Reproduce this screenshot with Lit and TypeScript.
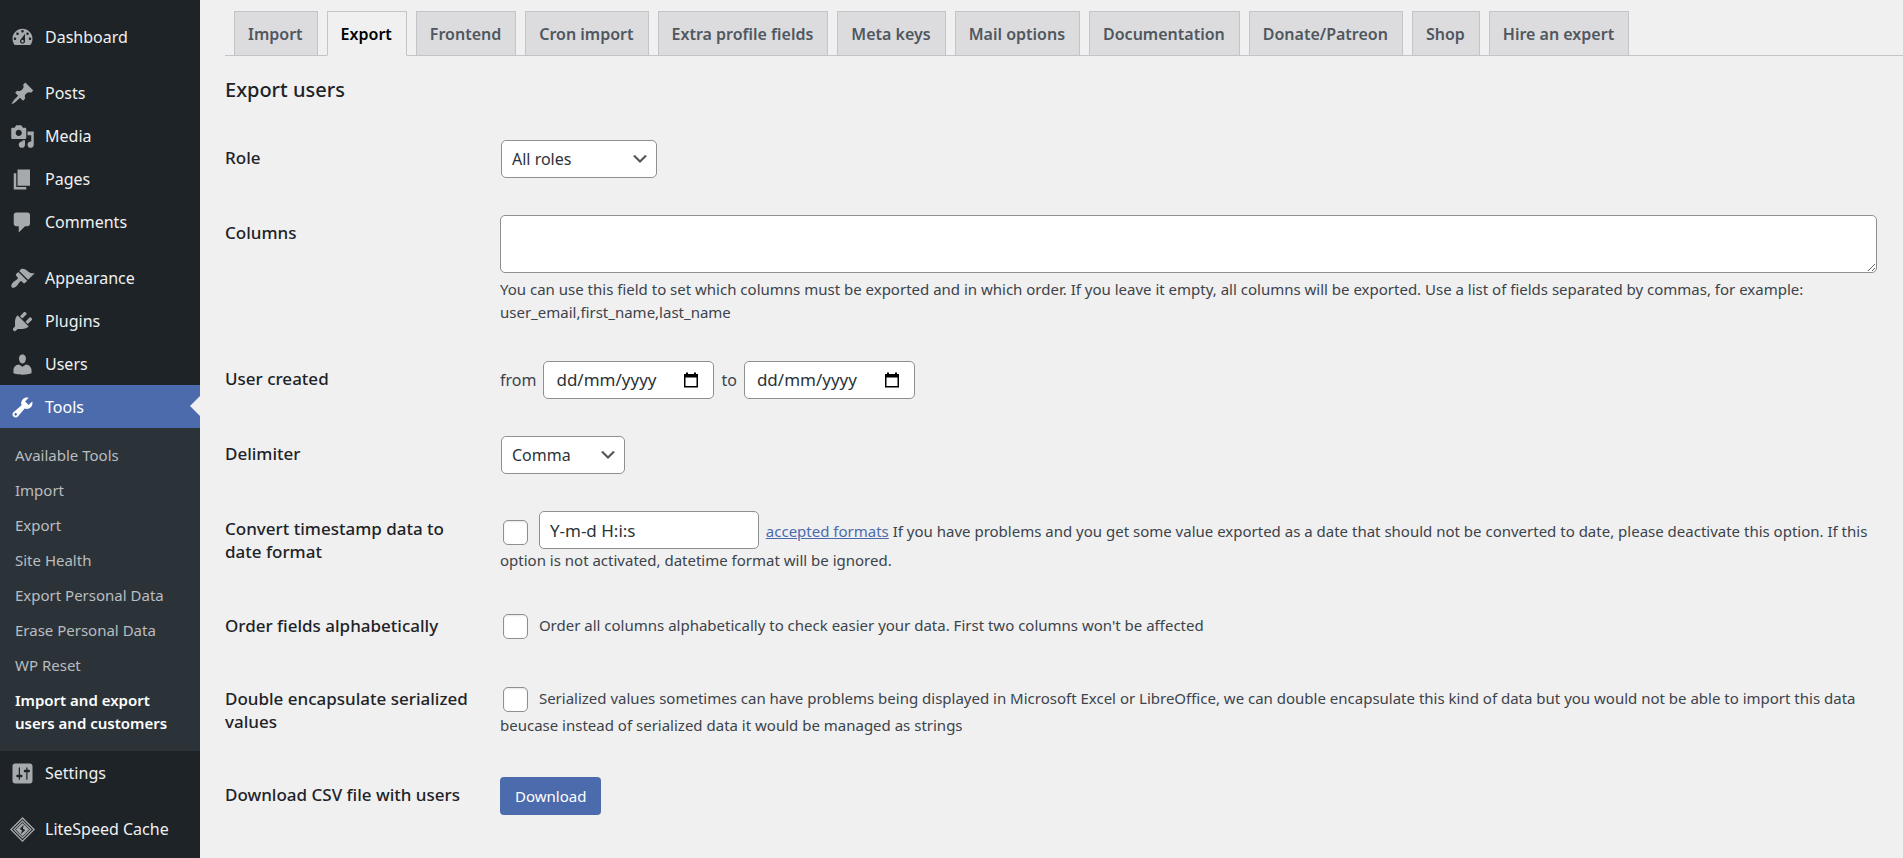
import { LitElement, html, css, svg } from "lit";
import { customElement, state } from "lit/decorators.js";
import { classMap } from "lit/directives/class-map.js";

/* Menu glyphs, all drawn on a 20 x 20 grid. */
const icons: Record<string, unknown> = {
  dashboard: svg`<path d="M3.76 16h12.48c1.1-1.37 1.76-3.11 1.76-5 0-4.42-3.58-8-8-8s-8 3.58-8 8c0 1.89.66 3.63 1.76 5zM10 4c.55 0 1 .45 1 1s-.45 1-1 1-1-.45-1-1 .45-1 1-1zM6 6c.55 0 1 .45 1 1s-.45 1-1 1-1-.45-1-1 .45-1 1-1zm8 0c.55 0 1 .45 1 1s-.45 1-1 1-1-.45-1-1 .45-1 1-1zm-5.37 5.55L12 7v6c0 1.1-.9 2-2 2s-2-.9-2-2c0-.57.24-1.08.63-1.45zM4 10c.55 0 1 .45 1 1s-.45 1-1 1-1-.45-1-1 .45-1 1-1zm12 0c.55 0 1 .45 1 1s-.45 1-1 1-1-.45-1-1 .45-1 1-1zm-5 3c0-.55-.45-1-1-1s-1 .45-1 1 .45 1 1 1 1-.45 1-1z"/>`,
  posts: svg`<path d="M10.44 3.02l1.82-1.82 6.36 6.35-1.83 1.82c-1.05-.68-2.48-.57-3.41.36l-.75.75c-.92.93-1.04 2.35-.35 3.41l-1.83 1.82-2.41-2.41-2.8 2.79c-.42.42-3.38 2.71-3.8 2.29s1.86-3.39 2.28-3.81l2.79-2.79L4.1 9.36l1.83-1.82c1.05.69 2.48.57 3.4-.36l.75-.75c.93-.92 1.05-2.35.36-3.41z"/>`,
  media: svg`<path d="M13 11V4c0-.55-.45-1-1-1h-1.670L9 1H5L3.670 3H2c-.55 0-1 .45-1 1v7c0 .55.45 1 1 1h10c.55 0 1-.45 1-1zM7 4.500c1.380 0 2.500 1.120 2.500 2.500S8.380 9.500 7 9.500 4.500 8.380 4.500 7 5.620 4.500 7 4.500zM14 6h5v10.500c0 1.380-1.120 2.500-2.500 2.500S14 17.880 14 16.500s1.120-2.500 2.500-2.500c.170 0 .340.020.500.050V9h-3V6zm-4 8.050V13h2v3.500c0 1.380-1.120 2.500-2.500 2.500S7 17.880 7 16.500 8.120 14 9.500 14c.170 0 .340.020.500.050z"/>`,
  pages: svg`<path d="M6 15V2h10v13H6zm-1 1h8v2H3V5h2v11z"/>`,
  comments: svg`<path d="M5 2h9c1.100 0 2 .9 2 2v7c0 1.100-.9 2-2 2h-2l-5 5v-5H5c-1.100 0-2-.9-2-2V4c0-1.100.9-2 2-2z"/>`,
  appearance: svg`<path d="M14.48 11.06L7.41 3.99l1.5-1.5c.5-.56 2.300-.47 3.510.32 1.210.8 1.430 1.280 2.910 2.100 1.180.64 2.450 1.260 4.450.85zm-.71.710L6.700 4.700 4.930 6.470c-.39.39-.39 1.020 0 1.410l1.060 1.060c.39.39.39 1.030 0 1.420-.600.600-1.430 1.110-2.210 1.690-.350.260-.700.530-1.010.840C1.430 14.230.400 16.080 1.400 17.070c.990 1 2.840-.030 4.180-1.360.310-.310.580-.660.850-1.020.570-.780 1.080-1.610 1.690-2.210.390-.390 1.020-.390 1.410 0l1.060 1.060c.390.390 1.020.390 1.410 0z"/>`,
  plugins: svg`<path d="M13.110 4.360L9.870 7.600 8 5.730l3.240-3.240c.350-.340 1.050-.200 1.560.320.520.510.660 1.210.310 1.550zm-8 1.770l.910-1.120 9.010 9.010-1.190.840c-.710.710-2.630 1.160-3.820 1.160H6.140L4.900 17.260c-.590.590-1.540.590-2.120 0-.590-.580-.590-1.530 0-2.120l1.240-1.240v-3.880c0-1.130.400-3.190 1.090-3.890zm7.260 3.970l3.240-3.240c.340-.350 1.040-.210 1.550.310.520.510.660 1.210.310 1.550l-3.240 3.250z"/>`,
  users: svg`<path d="M10 9.250c-2.270 0-2.730-3.440-2.730-3.440C7 4.020 7.820 2 9.970 2c2.160 0 2.980 2.020 2.710 3.810 0 0-.410 3.440-2.680 3.440zm0 2.570L12.720 10c2.390 0 4.520 2.330 4.520 4.530v2.490s-3.650 1.130-7.240 1.130c-3.650 0-7.240-1.130-7.240-1.130v-2.490c0-2.250 1.940-4.480 4.470-4.480z"/>`,
  tools: svg`<path d="M16.680 9.770c-1.340 1.340-3.300 1.670-4.950.99l-5.410 6.520c-.99.99-2.590.99-3.580 0s-.99-2.590 0-3.570l6.520-5.420c-.68-1.650-.350-3.610.99-4.950 1.280-1.280 3.120-1.620 4.720-1.060l-2.890 2.890 2.820 2.820 2.860-2.870c.530 1.580.180 3.390-1.080 4.650zM3.810 16.210c.400.390 1.040.390 1.430 0 .400-.400.400-1.040 0-1.430-.390-.400-1.030-.400-1.430 0-.390.390-.390 1.030 0 1.430z"/>`,
  settings: svg`<path d="M18 16V4c0-1.100-.9-2-2-2H4c-1.100 0-2 .9-2 2v12c0 1.100.9 2 2 2h12c1.100 0 2-.9 2-2zM8 11h1c.55 0 1 .45 1 1s-.45 1-1 1H8v1.500c0 .28-.22.5-.5.5s-.5-.22-.5-.5V13H6c-.55 0-1-.45-1-1s.45-1 1-1h1V5.500c0-.28.22-.5.5-.5s.5.22.5.500V11zm5-2h-1c-.55 0-1-.45-1-1s.45-1 1-1h1V5.500c0-.28.22-.5.5-.5s.5.22.5.5V7h1c.55 0 1 .45 1 1s-.45 1-1 1h-1v5.500c0 .28-.22.5-.5.5s-.5-.22-.5-.5V9z"/>`,
  litespeed: svg`<path fill-rule="evenodd" d="M10 0l10 10-10 10L0 10zM10 1.500L1.500 10l8.500 8.500 8.500-8.500zM10 2.600L17.400 10 10 17.400 2.600 10zM10 4L4 10l6 6 6-6zM10 4.700L15.300 10 10 15.300 4.700 10zM10.900 6.200L7.700 9.600l1.900 1-.9 3.200 3.500-3.500-1.900-1z"/>`,
};

interface MenuItem {
  icon: string;
  label: string;
  current?: boolean;
}

const menuGroups: MenuItem[][] = [
  [{ icon: "dashboard", label: "Dashboard" }],
  [
    { icon: "posts", label: "Posts" },
    { icon: "media", label: "Media" },
    { icon: "pages", label: "Pages" },
    { icon: "comments", label: "Comments" },
  ],
  [
    { icon: "appearance", label: "Appearance" },
    { icon: "plugins", label: "Plugins" },
    { icon: "users", label: "Users" },
    { icon: "tools", label: "Tools", current: true },
    { icon: "settings", label: "Settings" },
  ],
  [{ icon: "litespeed", label: "LiteSpeed Cache" }],
];

const toolsSubmenu = [
  "Available Tools",
  "Import",
  "Export",
  "Site Health",
  "Export Personal Data",
  "Erase Personal Data",
  "WP Reset",
  "Import and export users and customers",
];

const tabs = [
  "Import",
  "Export",
  "Frontend",
  "Cron import",
  "Extra profile fields",
  "Meta keys",
  "Mail options",
  "Documentation",
  "Donate/Patreon",
  "Shop",
  "Hire an expert",
];

@customElement("admin-menu")
export class AdminMenu extends LitElement {
  static styles = css`
    :host {
      display: block;
      box-sizing: border-box;
      padding-top: 15px;
      background: #1d2327;
      color: #f0f0f1;
    }
    ul {
      list-style: none;
      margin: 0;
      padding: 0;
    }
    .group + .group {
      margin-top: 13px;
    }
    .link {
      display: flex;
      align-items: center;
      gap: 10px;
      box-sizing: border-box;
      height: 43px;
      padding: 1px 0 0 10px;
      color: inherit;
      font-size: 16px;
      line-height: 23px;
      text-decoration: none;
    }
    .icon {
      width: 25px;
      height: 25px;
      fill: #a7aaad;
    }
    .current {
      position: relative;
      background: #4b6bac;
      color: #fff;
    }
    .current .icon {
      fill: #fff;
    }
    .current::after {
      content: "";
      position: absolute;
      right: 0;
      top: 11px;
      border: 10px solid transparent;
      border-right-color: #f0f0f1;
      border-left-width: 0;
    }
    .submenu {
      padding: 10px 0;
      background: #2c3338;
    }
    .sub {
      display: block;
      padding: 6px 15px;
      color: #b9bcc0;
      font-size: 15px;
      line-height: 23px;
      text-decoration: none;
    }
    .sub.active {
      color: #fff;
      font-weight: 600;
    }
  `;

  render() {
    return html`<nav aria-label="Main menu">
      ${menuGroups.map(
        (group) => html`<ul class="group">
          ${group.map(
            (item) => html`<li>
              <a class=${classMap({ link: true, current: !!item.current })} href="#">
                <svg class="icon" viewBox="0 0 20 20" aria-hidden="true">${icons[item.icon]}</svg>
                <span>${item.label}</span>
              </a>
              ${item.current
                ? html`<ul class="submenu">
                    ${toolsSubmenu.map(
                      (label, i) => html`<li>
                        <a
                          class=${classMap({ sub: true, active: i === toolsSubmenu.length - 1 })}
                          href="#"
                          >${label}</a
                        >
                      </li>`
                    )}
                  </ul>`
                : ""}
            </li>`
          )}
        </ul>`
      )}
    </nav>`;
  }
}

@customElement("tab-bar")
export class TabBar extends LitElement {
  @state() private active = "Export";

  static styles = css`
    :host {
      display: block;
    }
    .tabs {
      display: flex;
      gap: 9px;
      padding: 11px 0 0 9px;
      border-bottom: 1px solid #c3c4c7;
    }
    .tab {
      padding: 10px 14px 8px 13px;
      margin-bottom: -1px;
      border: 1px solid #c3c4c7;
      background: #dcdcde;
      color: #50575e;
      font-size: 16px;
      font-weight: 600;
      line-height: 25px;
      white-space: nowrap;
      text-decoration: none;
    }
    .tab.active {
      border-bottom-color: #f0f0f1;
      background: #f0f0f1;
      color: #000;
    }
  `;

  render() {
    return html`<nav class="tabs" aria-label="Sections">
      ${tabs.map(
        (label) => html`<a
          class=${classMap({ tab: true, active: label === this.active })}
          href="#"
          @click=${(e: Event) => {
            e.preventDefault();
            this.active = label;
          }}
          >${label}</a
        >`
      )}
    </nav>`;
  }
}

@customElement("export-form")
export class ExportForm extends LitElement {
  static styles = css`
    :host {
      display: block;
      padding-right: 13px;
    }
    * {
      box-sizing: border-box;
    }
    h2 {
      margin: 21px 0 19px;
      color: #1d2327;
      font-size: 20px;
      font-weight: 500;
      line-height: 25px;
    }
    .row {
      display: grid;
      grid-template-columns: 250px minmax(0, 1fr);
      column-gap: 25px;
    }
    .head {
      padding: 25px 0;
      color: #1d2327;
      font-size: 17px;
      font-weight: 500;
      line-height: 23px;
    }
    .cell {
      padding: 19px 0 18px;
      color: #3c434a;
      font-size: 15px;
      line-height: 22px;
    }
    .note {
      margin: 5px 0 0;
      line-height: 23px;
    }
    .control {
      height: 38px;
      border: 1px solid #8c8f94;
      border-radius: 5px;
      background: #fff;
      color: #2c3338;
      font-family: inherit;
      font-size: 16px;
      line-height: 24px;
    }
    .select {
      display: block;
      margin-left: 1px;
      padding: 0 30px 0 10px;
      appearance: none;
      background: #fff
        url("data:image/svg+xml,%3Csvg xmlns='http://www.w3.org/2000/svg' viewBox='0 0 20 20'%3E%3Cpath d='M5 6l5 5 5-5 2 1-7 7-7-7 2-1z' fill='%23555'/%3E%3C/svg%3E")
        no-repeat right 6px center / 20px 20px;
    }
    .role {
      width: 156px;
    }
    .delimiter {
      width: 124px;
    }
    .area {
      display: block;
      width: calc(100% - 13px);
      height: 58px;
      padding: 3px 8px;
      resize: vertical;
    }
    .dates {
      display: flex;
      align-items: center;
      gap: 7px;
      font-size: 16px;
    }
    .date {
      display: flex;
      align-items: center;
      width: 171px;
      padding: 0 14px 0 12px;
      font-size: 17px;
    }
    .date-input {
      flex: 1;
      min-width: 0;
      padding: 0;
      border: 0;
      outline: 0;
      background: none;
      color: inherit;
      font: inherit;
    }
    .date-input::placeholder {
      color: #2c3338;
      opacity: 1;
    }
    .picker {
      display: flex;
      padding: 0;
      border: 0;
      background: none;
    }
    .picker svg {
      width: 16px;
      height: 16px;
    }
    .check {
      width: 25px;
      height: 25px;
      margin: 6px 7px 2px 3px;
      appearance: none;
      border: 1px solid #8c8f94;
      border-radius: 5px;
      background: #fff;
      box-shadow: inset 0 1px 2px rgba(0, 0, 0, 0.1);
      vertical-align: -10px;
    }
    .check:checked {
      background: #4b6bac;
    }
    .format {
      width: 220px;
      margin-right: 3px;
      padding: 0 10px;
      font-size: 17px;
      vertical-align: baseline;
    }
    .link {
      color: #4b6bac;
    }
    .button {
      display: block;
      height: 38px;
      padding: 0 15px;
      border: 0;
      border-radius: 4px;
      background: #4b6bac;
      color: #fff;
      font-family: inherit;
      font-size: 15px;
    }
  `;

  private dateField(id: string, label: string) {
    return html`<label for=${id}>${label}</label>
      <span class="control date">
        <input class="date-input" id=${id} type="text" inputmode="numeric" placeholder="dd/mm/yyyy" />
        <button class="picker" type="button" aria-label="Show date picker">
          <svg viewBox="0 0 16 16" aria-hidden="true">
            <path fill-rule="evenodd" d="M1 2h2V.500h2V2h6V.500h2V2h2v13.500H1zM2.500 5.500V14h11V5.500z" />
          </svg>
        </button>
      </span>`;
  }

  render() {
    return html`<form @submit=${(e: Event) => e.preventDefault()}>
      <h2>Export users</h2>
      <div class="row">
        <label class="head" for="role">Role</label>
        <div class="cell">
          <select class="control select role" id="role">
            <option>All roles</option>
          </select>
        </div>
      </div>
      <div class="row">
        <label class="head" for="columns">Columns</label>
        <div class="cell">
          <textarea class="control area" id="columns"></textarea>
          <p class="note">
            You can use this field to set which columns must be exported and in which order. If you leave it
            empty, all columns will be exported. Use a list of fields separated by commas, for example:
            user_email,first_name,last_name
          </p>
        </div>
      </div>
      <div class="row">
        <span class="head">User created</span>
        <div class="cell dates">${this.dateField("from", "from")} ${this.dateField("to", "to")}</div>
      </div>
      <div class="row">
        <label class="head" for="delimiter">Delimiter</label>
        <div class="cell">
          <select class="control select delimiter" id="delimiter">
            <option>Comma</option>
          </select>
        </div>
      </div>
      <div class="row">
        <label class="head" for="convert">Convert timestamp data to date format</label>
        <div class="cell">
          <input class="check" id="convert" type="checkbox" />
          <input class="control format" type="text" value="Y-m-d H:i:s" aria-label="Date format" />
          <a class="link" href="#">accepted formats</a> If you have problems and you get some value exported as
          a date that should not be converted to date, please deactivate this option. If this option is not
          activated, datetime format will be ignored.
        </div>
      </div>
      <div class="row">
        <label class="head" for="order">Order fields alphabetically</label>
        <div class="cell">
          <input class="check" id="order" type="checkbox" />
          Order all columns alphabetically to check easier your data. First two columns won't be affected
        </div>
      </div>
      <div class="row">
        <label class="head" for="double">Double encapsulate serialized values</label>
        <div class="cell">
          <input class="check" id="double" type="checkbox" />
          Serialized values sometimes can have problems being displayed in Microsoft Excel or LibreOffice, we
          can double encapsulate this kind of data but you would not be able to import this data beucase
          instead of serialized data it would be managed as strings
        </div>
      </div>
      <div class="row">
        <label class="head" for="download">Download CSV file with users</label>
        <div class="cell"><button class="button" id="download" type="submit">Download</button></div>
      </div>
    </form>`;
  }
}

@customElement("app-root")
export class AppRoot extends LitElement {
  static styles = css`
    :host {
      display: grid;
      grid-template-columns: 200px minmax(0, 1fr);
      min-height: 100vh;
      background: #f0f0f1;
      font-family: "Noto Sans", "Open Sans", sans-serif;
    }
    .content {
      padding-left: 25px;
    }
  `;

  render() {
    return html`<admin-menu></admin-menu>
      <main class="content">
        <tab-bar></tab-bar>
        <export-form></export-form>
      </main>`;
  }
}
